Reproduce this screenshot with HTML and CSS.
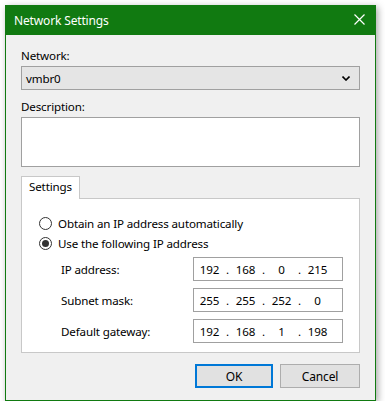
FILE: index.html
```html
<!DOCTYPE html>
<html lang="en">
  <head>
    <meta charset="UTF-8" />
    <title>Network Settings</title>
    <link rel="stylesheet" href="styles.css">
  </head>
  <body>
    <div class="dialog">
      <div class="titlebar">
        <span class="title">Network Settings</span>
        <svg class="close" width="11" height="11" viewBox="0 0 11 11">
          <path d="M0.5 0.5 L10.5 10.5 M10.5 0.5 L0.5 10.5" stroke="#fff" stroke-width="1.2" fill="none" />
        </svg>
      </div>

      <div class="content">
        <div class="label">Network:</div>
        <div class="select">
          <span>vmbr0</span>
          <svg width="8" height="5" viewBox="0 0 8 5">
            <path d="M0.5 0.5 L4 4 L7.5 0.5" stroke="#000" stroke-width="1.6" fill="none" />
          </svg>
        </div>

        <div class="label desc">Description:</div>
        <div class="textarea"></div>

        <div class="tabs">
          <div class="tab">Settings</div>
        </div>
        <div class="panel">
          <div class="radio">
            <span class="dot"></span>
            <span>Obtain an IP address automatically</span>
          </div>
          <div class="radio">
            <span class="dot checked"></span>
            <span>Use the following IP address</span>
          </div>

          <div class="ip-row first">
            <span class="ip-label">IP address:</span>
            <div class="ip">
              <span class="seg">192</span><span class="sep">.</span>
              <span class="seg">168</span><span class="sep">.</span>
              <span class="seg">0</span><span class="sep">.</span>
              <span class="seg">215</span>
            </div>
          </div>
          <div class="ip-row">
            <span class="ip-label">Subnet mask:</span>
            <div class="ip">
              <span class="seg">255</span><span class="sep">.</span>
              <span class="seg">255</span><span class="sep">.</span>
              <span class="seg">252</span><span class="sep">.</span>
              <span class="seg">0</span>
            </div>
          </div>
          <div class="ip-row">
            <span class="ip-label">Default gateway:</span>
            <div class="ip">
              <span class="seg">192</span><span class="sep">.</span>
              <span class="seg">168</span><span class="sep">.</span>
              <span class="seg">1</span><span class="sep">.</span>
              <span class="seg">198</span>
            </div>
          </div>
        </div>

        <div class="buttons">
          <button class="btn ok">OK</button>
          <button class="btn">Cancel</button>
        </div>
      </div>
    </div>
  </body>
</html>
```

FILE: styles.css
```css
* {
  box-sizing: border-box;
}

body {
  margin: 0;
  background: #fff;
  font-family: "Noto Sans", sans-serif;
  font-size: 11.6px;
  letter-spacing: -0.15px;
  color: #000;
}

.dialog {
  margin: 5px 0 0 5px;
  width: 371px;
  height: 396px;
  background: #f0f0f0;
  border: 1px solid #117a11;
  border-top: none;
  box-shadow: 2px 2px 7px rgba(0, 0, 0, 0.35);
}

.titlebar {
  height: 30px;
  margin: 0 -1px;
  background: #117a11;
  display: flex;
  align-items: center;
  justify-content: space-between;
  padding: 0 11px 0 9px;
  color: #fff;
}

.title {
  font-size: 12px;
}

.close {
  display: block;
  margin-top: -1px;
}

.content {
  padding: 13px 15px 0 15px;
}

.label {
  line-height: 16px;
  margin-bottom: 2px;
}

.label.desc {
  margin-top: 9px;
}

.select {
  height: 24px;
  background: #e5e5e5;
  border: 1px solid #a0a0a0;
  display: flex;
  align-items: center;
  justify-content: space-between;
  padding: 0 9px 0 4px;
}

.textarea {
  margin-top: 1px;
  height: 50px;
  background: #fff;
  border: 1px solid #a0a0a0;
}

.tabs {
  margin-top: 9px;
  display: flex;
}

.tab {
  height: 23px;
  width: 59px;
  background: #fff;
  border: 1px solid #c8c8c8;
  border-bottom: none;
  padding: 2px 0 0 7px;
  margin-bottom: -1px;
  position: relative;
}

.panel {
  height: 155px;
  background: #fff;
  border: 1px solid #c8c8c8;
  padding: 14px 0 0 17px;
}

.radio {
  height: 20px;
  display: flex;
  align-items: center;
  gap: 6px;
}

.dot {
  width: 13px;
  height: 13px;
  border: 1px solid #333;
  border-radius: 50%;
  background: #fff;
  display: flex;
  align-items: center;
  justify-content: center;
}

.dot.checked::after {
  content: "";
  width: 7px;
  height: 7px;
  border-radius: 50%;
  background: #333;
}

.ip-row {
  display: flex;
  align-items: center;
  margin-top: 7px;
  padding-left: 22px;
}

.ip-row.first {
  margin-top: 4px;
}

.ip-label {
  width: 132px;
}

.ip {
  width: 150px;
  height: 24px;
  border: 1px solid #a0a0a0;
  display: flex;
  align-items: center;
  padding-left: 1px;
}

.seg {
  width: 29px;
  text-align: center;
}

.sep {
  width: 7px;
  text-align: center;
}

.buttons {
  display: flex;
  justify-content: flex-end;
  gap: 7px;
  margin-top: 11px;
}

.btn {
  height: 24px;
  width: 80px;
  font-family: inherit;
  font-size: 12px;
  letter-spacing: inherit;
  background: #e1e1e1;
  border: 1px solid #adadad;
  padding: 0;
  color: #000;
}

.btn.ok {
  width: 78px;
  border: 2px solid #0078d7;
}
```
